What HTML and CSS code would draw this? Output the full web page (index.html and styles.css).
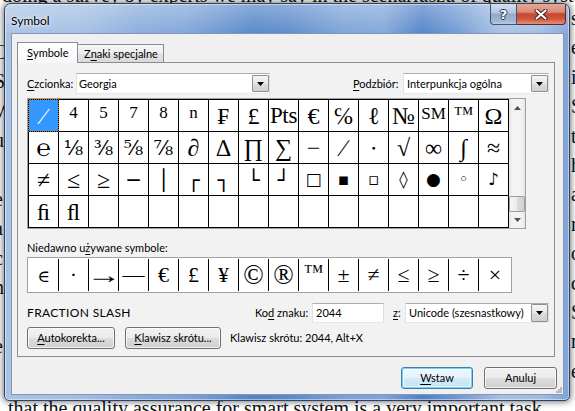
FILE: index.html
```html
<!DOCTYPE html>
<html lang="pl">
<head>
<meta charset="utf-8">
<title>Symbol</title>
<link rel="stylesheet" href="styles.css">
</head>
<body>
<div class="strip strip-top"><p>doing a survey by experts we may say in the scenariuszu of quality systems, we got only</p></div>
<div class="strip strip-left">
  <p>O</p><p>S</p><p>W</p><p>u</p><p>i</p><p>e</p><p>a</p><p>c</p><p>n</p><p>i</p><p>e</p><p>t</p>
</div>
<div class="strip strip-right">
  <p>s</p><p>e</p><p>i</p><p>S</p><p>t</p><p>h</p><p>a</p><p>r</p><p>o</p><p>d</p><p>S</p><p>n</p><p>e</p>
</div>
<div class="strip strip-bottom"><p>that the quality assurance for smart system is a very important task</p></div>

<div class="window">
  <div class="titlebar">
    <span class="title">Symbol</span>
    <div class="caption">
      <span class="cap-btn help">?</span>
      <span class="cap-btn close">
        <svg width="14" height="11" viewBox="0 0 14 11">
          <path d="M2.5 1.5 L11.5 9.5 M11.5 1.5 L2.5 9.5" stroke="#3a1e1e" stroke-width="4" stroke-linecap="round" fill="none"/>
          <path d="M2.5 1.5 L11.5 9.5 M11.5 1.5 L2.5 9.5" stroke="#ffffff" stroke-width="2.2" stroke-linecap="round" fill="none"/>
        </svg>
      </span>
    </div>
  </div>

  <div class="client">
    <div class="tabs">
      <span class="tab active"><u>S</u>ymbole</span>
      <span class="tab">Z<u>n</u>aki specjalne</span>
    </div>

    <div class="panel">
      <div class="font-row">
        <span class="lbl lbl-font"><u>C</u>zcionka:</span>
        <div class="combo font-combo">
          <span class="combo-text">Georgia</span>
          <span class="combo-btn"><svg width="7" height="4" viewBox="0 0 7 4"><path d="M0 0h7L3.5 4z" fill="#000"/></svg></span>
        </div>
        <span class="spacer"></span>
        <span class="lbl lbl-sub"><u>P</u>odzbiór:</span>
        <div class="combo sub-combo">
          <span class="combo-text">Interpunkcja ogólna</span>
          <span class="combo-btn"><svg width="7" height="4" viewBox="0 0 7 4"><path d="M0 0h7L3.5 4z" fill="#000"/></svg></span>
        </div>
      </div>

      <div class="grid-wrap">
        <div class="grid">
          <span class="cell sel">⁄</span>
          <span class="cell sup">4</span>
          <span class="cell sup">5</span>
          <span class="cell sup">7</span>
          <span class="cell sup">8</span>
          <span class="cell sup">n</span>
          <span class="cell">₣</span>
          <span class="cell">£</span>
          <span class="cell pts">Pts</span>
          <span class="cell">€</span>
          <span class="cell">℅</span>
          <span class="cell">ℓ</span>
          <span class="cell">№</span>
          <span class="cell sm">SM</span>
          <span class="cell tm">™</span>
          <span class="cell">Ω</span>

          <span class="cell">℮</span>
          <span class="cell frac">⅛</span>
          <span class="cell frac">⅜</span>
          <span class="cell frac">⅝</span>
          <span class="cell frac">⅞</span>
          <span class="cell">∂</span>
          <span class="cell">∆</span>
          <span class="cell">∏</span>
          <span class="cell">∑</span>
          <span class="cell">−</span>
          <span class="cell">∕</span>
          <span class="cell">∙</span>
          <span class="cell">√</span>
          <span class="cell">∞</span>
          <span class="cell">∫</span>
          <span class="cell">≈</span>

          <span class="cell">≠</span>
          <span class="cell">≤</span>
          <span class="cell">≥</span>
          <span class="cell box">─</span>
          <span class="cell box">│</span>
          <span class="cell box">┌</span>
          <span class="cell box">┐</span>
          <span class="cell box">└</span>
          <span class="cell box">┘</span>
          <span class="cell geo">□</span>
          <span class="cell geo">▪</span>
          <span class="cell geo">▫</span>
          <span class="cell geo">◊</span>
          <span class="cell geo">●</span>
          <span class="cell geo">◦</span>
          <span class="cell geo">♪</span>

          <span class="cell">ﬁ</span>
          <span class="cell">ﬂ</span>
          <span class="cell"></span>
          <span class="cell"></span>
          <span class="cell"></span>
          <span class="cell"></span>
          <span class="cell"></span>
          <span class="cell"></span>
          <span class="cell"></span>
          <span class="cell"></span>
          <span class="cell"></span>
          <span class="cell"></span>
          <span class="cell"></span>
          <span class="cell"></span>
          <span class="cell"></span>
          <span class="cell"></span>
        </div>
        <div class="vscroll">
          <span class="sb-arrow"><svg width="7" height="4" viewBox="0 0 7 4"><path d="M0 4h7L3.5 0z" fill="#505050"/></svg></span>
          <span class="sb-track"></span>
          <span class="sb-thumb"></span>
          <span class="sb-arrow"><svg width="7" height="4" viewBox="0 0 7 4"><path d="M0 0h7L3.5 4z" fill="#505050"/></svg></span>
        </div>
      </div>

      <div class="recent-label">Niedawno u<u>ż</u>ywane symbole:</div>
      <div class="recent">
        <span class="rc elem">∈</span>
        <span class="rc">·</span>
        <span class="rc"><span class="arrow">→</span></span>
        <span class="rc">—</span>
        <span class="rc">€</span>
        <span class="rc">£</span>
        <span class="rc">¥</span>
        <span class="rc circ">©</span>
        <span class="rc circ">®</span>
        <span class="rc tm">™</span>
        <span class="rc">±</span>
        <span class="rc">≠</span>
        <span class="rc">≤</span>
        <span class="rc">≥</span>
        <span class="rc">÷</span>
        <span class="rc">×</span>
      </div>

      <div class="info-row">
        <span class="char-name">FRACTION SLASH</span>
        <span class="lbl lbl-code">Ko<u>d</u> znaku:</span>
        <span class="textbox">2044</span>
        <span class="lbl lbl-from"><u>z</u>:</span>
        <div class="combo from-combo">
          <span class="combo-text">Unicode (szesnastkowy)</span>
          <span class="combo-btn"><svg width="7" height="4" viewBox="0 0 7 4"><path d="M0 0h7L3.5 4z" fill="#000"/></svg></span>
        </div>
      </div>

      <div class="btn-row">
        <button class="btn btn-auto"><u>A</u>utokorekta...</button>
        <button class="btn btn-keys"><u>K</u>lawisz skrótu...</button>
        <span class="shortcut">Klawisz skrótu: 2044, Alt+X</span>
      </div>
    </div>

    <div class="footer">
      <button class="btn btn-default"><u>W</u>staw</button>
      <button class="btn btn-cancel">Anuluj</button>
    </div>
    <svg class="grip" width="6" height="6" viewBox="0 0 6 6">
      <rect x="4" y="0" width="2" height="2" fill="#b8b8b8"/>
      <rect x="2" y="2" width="2" height="2" fill="#b8b8b8"/>
      <rect x="4" y="2" width="2" height="2" fill="#b8b8b8"/>
      <rect x="0" y="4" width="2" height="2" fill="#b8b8b8"/>
      <rect x="2" y="4" width="2" height="2" fill="#b8b8b8"/>
      <rect x="4" y="4" width="2" height="2" fill="#b8b8b8"/>
    </svg>
  </div>
</div>
</body>
</html>
```

FILE: styles.css
```css
* { box-sizing: border-box; }
html, body { margin: 0; padding: 0; }
body {
  width: 575px;
  height: 411px;
  overflow: hidden;
  position: relative;
  background: #ffffff;
  font-family: Lato, "Noto Sans", sans-serif;
  font-size: 11px;
  color: #000;
}
u { text-decoration: underline; text-underline-offset: 2px; }

/* background document, only the strips that show around the dialog */
.strip {
  position: absolute;
  overflow: hidden;
  font-family: "Liberation Serif", serif;
  font-size: 20px;
  color: #111;
}
.strip p { margin: 0; white-space: nowrap; }
.strip-top { left: 0; top: 0; width: 575px; height: 4px; }
.strip-top p { line-height: 20px; margin-top: -15px; padding-left: 2px; }
.strip-bottom { left: 0; top: 401px; width: 575px; height: 10px; }
.strip-bottom p { line-height: 20px; margin-top: -3px; padding-left: 8px; }
.strip-left { left: 0; top: 38px; width: 4px; height: 362px; }
.strip-left p { line-height: 29.4px; margin-left: -6px; }
.strip-right { left: 570px; top: 4px; width: 5px; height: 397px; }
.strip-right p { line-height: 29.4px; margin-left: 1px; }

/* window */
.window {
  position: absolute;
  left: 4px;
  top: 3px;
  width: 566px;
  height: 398px;
  border: 1px solid #2f4260;
  border-radius: 7px 7px 5px 5px;
  background:
    linear-gradient(180deg, rgba(255,255,255,.32) 0, rgba(255,255,255,.06) 28px, rgba(255,255,255,0) 30px),
    linear-gradient(90deg, #a9c3e5 0%, #a2bde3 14%, #87aadb 24%, #7fa4d8 32%, #5384c8 44%, #5a89ca 50%, #7aa1d6 60%, #7fa5d8 67%, #4f80c6 74%, #6f98d2 80%, #a6c0e4 88%, #a0bce2 95%, #7fa3d8 100%);
  box-shadow: 0 0 6px 1px rgba(0,0,0,.55), inset 0 0 0 1px rgba(255,255,255,.45);
  display: flex;
  flex-direction: column;
}
.titlebar {
  height: 29px;
  display: flex;
  align-items: flex-start;
  padding-left: 6px;
}
.title {
  margin-top: 10px;
  line-height: 14px;
  font-size: 12px;
  color: #000;
  text-shadow: 0 0 6px rgba(255,255,255,.9), 0 0 3px rgba(255,255,255,.8);
}
.caption {
  margin-left: auto;
  margin-right: 3px;
  display: flex;
}
.cap-btn {
  height: 21px;
  display: flex;
  align-items: center;
  justify-content: center;
  border: 1px solid #3f5573;
  border-top: none;
}
.help {
  width: 27px;
  border-radius: 0 0 0 4px;
  background: linear-gradient(180deg, #d3def0 0%, #b3c6e0 45%, #93abcb 50%, #9fb6d5 85%, #b9cce6 100%);
  color: #fff;
  font-family: "DejaVu Sans", sans-serif;
  font-weight: bold;
  font-size: 13px;
  text-shadow: 0 0 1px #2a3a55, 1px 0 0 #2a3a55, -1px 0 0 #2a3a55, 0 1px 0 #2a3a55, 0 -1px 0 #2a3a55;
}
.close {
  width: 49px;
  border-left: none;
  border-color: #5b2a2a;
  border-radius: 0 0 4px 0;
  background: linear-gradient(180deg, #e9a898 0%, #d98a76 40%, #c6472f 50%, #cf563b 75%, #e4917a 100%);
}

/* client area */
.client {
  position: relative;
  margin-left: 6px;
  width: 553px;
  height: 362px;
  border: 1px solid #8297b6;
  background: #f0f0f0;
}
.tabs {
  margin-top: 8px;
  padding-left: 5px;
  height: 20px;
  display: flex;
  align-items: flex-end;
}
.tab {
  display: flex;
  align-items: center;
  border: 1px solid #898c95;
  border-bottom: none;
  line-height: 14px;
  white-space: nowrap;
}
.tab.active {
  position: relative;
  z-index: 1;
  width: 61px;
  height: 21px;
  margin-bottom: -1px;
  padding-left: 9px;
  padding-bottom: 1px;
  background: linear-gradient(180deg, #ffffff, #f7f7f7);
}
.tab:not(.active) {
  width: 87px;
  height: 18px;
  margin-left: -1px;
  padding-left: 6px;
  background: linear-gradient(180deg, #f6f6f6 0%, #ececec 50%, #e1e1e1 51%, #dadada 100%);
}

.panel {
  margin-left: 5px;
  width: 538px;
  height: 295px;
  border: 1px solid #898c95;
  background: #f2f2f2;
  padding: 10px 5px 0 9px;
}
.font-row {
  height: 21px;
  display: flex;
  align-items: center;
}
.lbl { line-height: 14px; white-space: nowrap; }
.lbl-font { width: 49px; }
.lbl-sub { width: 50px; }
.spacer { flex: 1; }
.combo {
  height: 21px;
  display: flex;
  align-items: center;
  border: 1px solid #abadb3;
  border-left-color: #e2e3ea;
  border-right-color: #dbdfe6;
  border-bottom-color: #e3e9ef;
  background: #fff;
}
.font-combo { width: 194px; }
.sub-combo { width: 146px; }
.combo-text { flex: 1; padding-left: 2px; white-space: nowrap; line-height: 14px; }
.sub-combo .combo-text { padding-left: 3px; }
.combo-btn {
  width: 17px;
  height: 17px;
  display: flex;
  align-items: center;
  justify-content: center;
  border: 1px solid #8f8f8f;
  border-radius: 1px;
  background: linear-gradient(180deg, #f4f4f4 0%, #e8e8e8 50%, #dcdcdc 51%, #d0d0d0 100%);
}

/* symbol grid */
.grid-wrap {
  margin-top: 4px;
  width: 499px;
  display: flex;
  border: 1px solid #a0a0a0;
  background: #fff;
}
.grid {
  display: grid;
  grid-template-columns: repeat(16, 30px);
  grid-auto-rows: 32px;
  border-left: 1px solid #000;
  border-top: 1px solid #000;
}
.cell {
  position: relative;
  display: flex;
  align-items: center;
  justify-content: center;
  border-right: 1px solid #000;
  border-bottom: 1px solid #000;
  background: #fff;
  font-family: "Liberation Serif", "DejaVu Serif", serif;
  font-size: 24px;
  line-height: 1;
  color: #000;
  white-space: nowrap;
}
.cell.sel { background: #3399ff; color: #fff; }
.cell.sel::after {
  content: "";
  position: absolute;
  left: -1px; top: -1px; right: -1px; bottom: -1px;
  border: 1px dotted #cc6600;
}
.cell.sup { font-size: 17px; padding-bottom: 6px; }
.cell.pts { font-size: 23px; letter-spacing: -0.3px; }
.cell.sm { font-size: 17px; padding-bottom: 4px; }
.cell.tm { font-size: 20px; padding-bottom: 6px; }
.cell.frac { font-family: "DejaVu Serif", serif; font-size: 20px; }
.cell.box { font-family: "DejaVu Sans Mono", monospace; font-size: 20px; }
.cell.geo { font-family: "DejaVu Sans", sans-serif; font-size: 17px; }

.vscroll {
  width: 16px;
  display: flex;
  flex-direction: column;
  background: linear-gradient(90deg, #e4e4e4 0%, #f3f3f3 25%, #f3f3f3 75%, #e6e6e6 100%);
}
.sb-arrow {
  height: 16px;
  display: flex;
  align-items: center;
  justify-content: center;
}
.sb-arrow:first-child { height: 17px; }
.sb-track { flex: 1; }
.sb-thumb {
  height: 16px;
  border: 1px solid #9b9b9b;
  border-radius: 2px;
  background: linear-gradient(90deg, #f5f5f5 0%, #ebebeb 50%, #dcdcdc 51%, #d2d2d2 100%);
}

/* recent */
.recent-label {
  margin-top: 11px;
  height: 15px;
  line-height: 15px;
}
.recent {
  margin-top: 2px;
  width: 485px;
  height: 36px;
  display: flex;
  padding: 1px 0 1px 1px;
  border: 1px solid #a0a0a0;
  background: #fff;
}
.rc {
  width: 30px;
  display: flex;
  align-items: center;
  justify-content: center;
  border-right: 1px solid #000;
  font-family: "Liberation Serif", "DejaVu Serif", serif;
  font-size: 22px;
  line-height: 1;
}
.rc:last-child { width: 32px; border-right: none; }
.rc.circ { font-size: 27px; }
.rc.tm { font-size: 20px; padding-bottom: 8px; }
.rc.elem { font-size: 17px; padding-top: 2px; }
.arrow { display: inline-block; font-size: 24px; transform: scaleX(1.45); }

/* info row */
.info-row {
  margin-top: 10px;
  height: 20px;
  display: flex;
  align-items: center;
}
.char-name { width: 228px; line-height: 14px; font-size: 12px; letter-spacing: 0.35px; }
.lbl-code { width: 57px; }
.textbox {
  width: 72px;
  height: 20px;
  display: flex;
  align-items: center;
  padding-left: 3px;
  border: 1px solid #abadb3;
  border-left-color: #e2e3ea;
  border-right-color: #dbdfe6;
  border-bottom-color: #e3e9ef;
  background: #fff;
  line-height: 14px;
}
.lbl-from { width: 12px; margin-left: 9px; }
.from-combo { width: 144px; height: 20px; }
.from-combo .combo-text { padding-left: 3px; }
.from-combo .combo-btn { height: 18px; }

/* buttons */
.btn-row {
  margin-top: 4px;
  height: 22px;
  display: flex;
  align-items: center;
}
.btn {
  height: 22px;
  padding: 0;
  border: 1px solid #707070;
  border-radius: 3px;
  background: linear-gradient(180deg, #f2f2f2 0%, #ebebeb 50%, #dddddd 51%, #cfcfcf 100%);
  box-shadow: inset 0 0 0 1px rgba(255,255,255,.75);
  font-family: Lato, "Noto Sans", sans-serif;
  font-size: 11px;
  line-height: 14px;
  color: #000;
  white-space: nowrap;
}
.btn-auto { width: 88px; }
.btn-keys { width: 96px; margin-left: 10px; }
.shortcut { margin-left: 9px; line-height: 14px; white-space: nowrap; }

.footer {
  margin-top: 10px;
  padding-right: 6px;
  display: flex;
  justify-content: flex-end;
}
.btn-default {
  width: 72px;
  border-color: #3c7fb1;
  box-shadow: inset 0 0 0 1px #78d1f5, inset 0 0 0 2px rgba(255,255,255,.6);
  background: linear-gradient(180deg, #f0f8fd 0%, #e4f2fb 50%, #d4ebf8 51%, #c6e3f5 100%);
}
.btn-cancel { width: 73px; margin-left: 11px; }

.grip {
  position: absolute;
  right: 1px;
  bottom: 1px;
}
```
